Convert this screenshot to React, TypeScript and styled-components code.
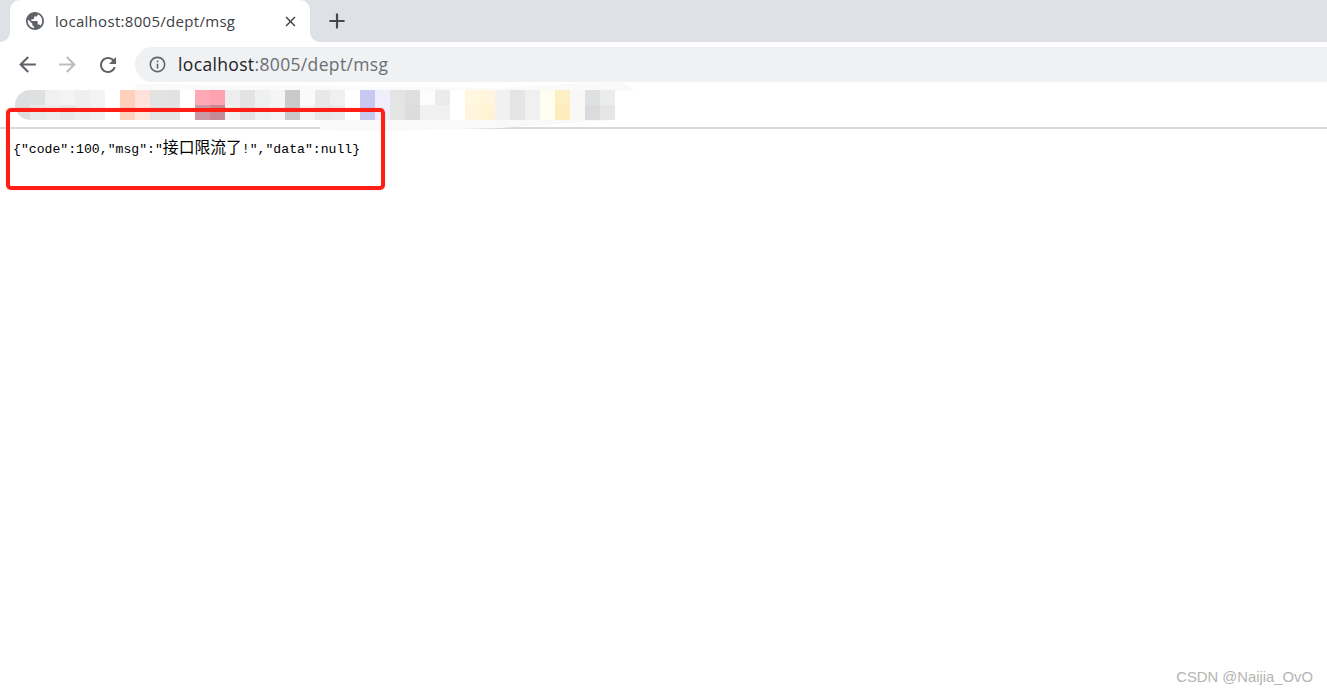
import React from "react";
import styled, { createGlobalStyle } from "styled-components";

const Global = createGlobalStyle`
  html, body { margin: 0; padding: 0; background: #fff; }
  body { font-family: "Open Sans", "Liberation Sans", sans-serif; overflow: hidden; }
`;

const Page = styled.div`
  position: relative;
  display: flex;
  flex-direction: column;
  width: 1327px;
  height: 695px;
  overflow: hidden;
  background: #fff;
`;

const TabStrip = styled.div`
  display: flex;
  align-items: stretch;
  height: 42px;
  background: #dee1e6;
  padding-left: 10px;
`;

const Tab = styled.div`
  position: relative;
  display: flex;
  align-items: center;
  width: 300px;
  box-sizing: border-box;
  padding: 0 11px 0 16px;
  background: #fff;
  border-radius: 10px 10px 0 0;
  color: #5f6368;
  &::before, &::after {
    content: "";
    position: absolute;
    bottom: 0;
    width: 10px;
    height: 10px;
    background: radial-gradient(circle at var(--cx) 0, #dee1e6 9.5px, #fff 10.5px);
  }
  &::before { left: -10px; --cx: 0; }
  &::after { right: -10px; --cx: 100%; }
`;

const TabTitle = styled.span`
  flex: 1;
  margin-left: 11px;
  font-size: 15px;
  letter-spacing: 0.3px;
  color: #3c4043;
  white-space: nowrap;
`;

const CloseGlyph = styled.span`
  display: flex;
  color: #3c4043;
`;

const NewTab = styled.div`
  display: flex;
  align-items: center;
  justify-content: center;
  width: 26px;
  margin-left: 14px;
  color: #44484c;
`;

const Toolbar = styled.div`
  display: flex;
  align-items: center;
  height: 40px;
  box-sizing: border-box;
  padding: 5px 0 0 7.5px;
  background: #fff;
`;

const NavButton = styled.div<{ $dim?: boolean }>`
  display: flex;
  align-items: center;
  justify-content: center;
  width: 40px;
  color: ${(p) => (p.$dim ? "#babcbe" : "#5f6368")};
`;

const Omnibox = styled.div`
  flex: 1;
  display: flex;
  align-items: center;
  height: 35px;
  margin-left: 7.5px;
  padding-left: 12.5px;
  background: #eff1f3;
  border-radius: 17.5px 0 0 17.5px;
  color: #5f6368;
`;

const Url = styled.div`
  margin-left: 11.5px;
  padding-bottom: 2px;
  font-size: 17.5px;
  letter-spacing: 0.35px;
  color: #6b6f74;
  white-space: nowrap;
`;

const Host = styled.span`
  color: #202124;
`;

const BookmarkBar = styled.div`
  height: 47px;
  box-sizing: border-box;
  display: flex;
  padding: 8px 0 0 15px;
  background: #fff;
  border-bottom: 2px solid #d9d9de;
`;

const MosaicColumn = styled.div`
  position: relative;
  z-index: 1;
  display: flex;
  flex-direction: column;
  width: 15px;
  height: 30px;
  &:first-child { border-radius: 15px 0 0 15px; overflow: hidden; }
`;

const MosaicCell = styled.div<{ $c: string }>`
  height: 15px;
  background: ${(p) => p.$c};
`;

const Smear = styled.svg`
  position: absolute;
  left: 0;
  top: 78px;
  pointer-events: none;
`;

const Body = styled.pre`
  margin: 0;
  padding: 8px 0 0 13px;
  height: 20px;
  line-height: 20px;
  font-family: "Liberation Mono", monospace;
  font-size: 13.15px;
  color: #000;
  white-space: pre;
`;

const Cjk = styled.span`
  font-family: "Noto Sans CJK SC", sans-serif;
  font-size: 15.8px;
  font-weight: 400;
`;

const Highlight = styled.div`
  position: absolute;
  z-index: 2;
  left: 6px;
  top: 107.5px;
  width: 379px;
  height: 82.5px;
  box-sizing: border-box;
  border: 4px solid #ff1f14;
  border-radius: 5px;
  box-shadow: 0 0 1px rgba(255, 60, 50, 0.7);
`;

const Watermark = styled.div`
  position: absolute;
  right: 14px;
  top: 669px;
  font-family: "Liberation Sans", Arial, sans-serif;
  font-size: 14.8px;
  line-height: 17px;
  color: #b4b4b4;
  white-space: nowrap;
`;

const W = "#ffffff";
const mosaic: [string, string][] = [
  ["#dcdee0", "#dcdee0"], ["#dfe0e2", "#e9eaea"], ["#f0f0f0", "#ededed"], ["#f3f3f3", "#e8e8e8"],
  ["#f0efed", "#eeeeee"], ["#f3f4f6", "#f1f2f2"], [W, W], ["#ffd0bb", "#ffd0bb"],
  ["#ffe2da", "#ffe6de"], ["#e3e3e1", "#e4e4e4"], ["#e0e2e4", "#e4e5e6"], [W, W],
  ["#ffa8b6", "#cc9aa6"], ["#ffa2b0", "#c48a96"], ["#eeeeee", "#f2f2f2"], ["#e3e3e3", "#e3e3e3"],
  ["#eff1f1", "#eff0f0"], ["#f5f5f5", "#f5f5f5"], ["#c8c9ca", "#cacaca"], ["#fafafa", "#f4f4f4"],
  ["#e8e8e8", "#e8e8e8"], ["#eff0f1", "#eaeaea"], [W, W], ["#c8c8f2", "#c8c8f2"],
  ["#eeeefc", "#eeeefc"], ["#e4e4e4", "#e4e5e3"], ["#dfdfdf", "#dcdcdc"], ["#fcfcfc", "#f0f0f0"],
  ["#ebebeb", "#f0f0f0"], [W, W], ["#fff7e0", "#fff5dc"], ["#fff5dc", "#fff3d4"],
  ["#f1f1f1", "#f1f1f1"], ["#e4e4e4", "#e4e4e4"], ["#f0f0f0", "#f0f0f0"], ["#fffcf0", "#fffcf0"],
  ["#fdf0c4", "#fdecbc"], ["#f9f8f6", "#f9f8f6"], ["#dfe0e2", "#dbdbdd"], ["#ebeded", "#e6e6e6"],
];

const Icon = ({ d, size, box = "0 0 24 24" }: { d: string; size: number; box?: string }) => (
  <svg width={size} height={size} viewBox={box} fill="currentColor" aria-hidden="true">
    <path d={d} />
  </svg>
);

const GLOBE = "M12 2C6.48 2 2 6.48 2 12s4.48 10 10 10 10-4.48 10-10S17.52 2 12 2zm-1 17.93c-3.95-.49-7-3.85-7-7.93 0-.62.08-1.21.21-1.79L9 15v1c0 1.1.9 2 2 2v1.93zm6.9-2.54c-.26-.81-1-1.39-1.9-1.39h-1v-3c0-.55-.45-1-1-1H8v-2h2c.55 0 1-.45 1-1V7h2c1.1 0 2-.9 2-2v-.41c2.93 1.19 5 4.06 5 7.41 0 2.08-.8 3.97-2.1 5.39z";
const CLOSE = "M19 6.41L17.59 5 12 10.59 6.41 5 5 6.41 10.59 12 5 17.59 6.41 19 12 13.41 17.59 19 19 17.59 13.41 12z";
const ADD = "M19 13h-6v6h-2v-6H5v-2h6V5h2v6h6v2z";
const BACK = "M20 11H7.83l5.59-5.59L12 4l-8 8 8 8 1.41-1.41L7.83 13H20v-2z";
const FORWARD = "M4 11h12.17l-5.59-5.59L12 4l8 8-8 8-1.41-1.41L16.17 13H4v-2z";
const RELOAD = "M17.65 6.35C16.2 4.9 14.21 4 12 4c-4.42 0-7.99 3.58-7.99 8s3.57 8 7.99 8c3.73 0 6.84-2.55 7.73-6h-2.08c-.82 2.33-3.04 4-5.65 4-3.31 0-6-2.69-6-6s2.69-6 6-6c1.66 0 3.14.69 4.22 1.78L13 11h7V4l-2.35 2.35z";
const INFO = "M11 7h2v2h-2zm0 4h2v6h-2zm1-9C6.48 2 2 6.48 2 12s4.48 10 10 10 10-4.48 10-10S17.52 2 12 2zm0 18c-4.41 0-8-3.59-8-8s3.59-8 8-8 8 3.59 8 8-3.59 8-8 8z";

export default function App() {
  return (
    <Page>
      <Global />
      <TabStrip>
        <Tab>
          <Icon d={GLOBE} size={18} box="2 2 20 20" />
          <TabTitle>localhost:8005/dept/msg</TabTitle>
          <CloseGlyph><Icon d={CLOSE} size={17} /></CloseGlyph>
        </Tab>
        <NewTab>
          <Icon d={ADD} size={26} />
        </NewTab>
      </TabStrip>
      <Toolbar>
        <NavButton><Icon d={BACK} size={25} /></NavButton>
        <NavButton $dim><Icon d={FORWARD} size={25} /></NavButton>
        <NavButton><Icon d={RELOAD} size={24} /></NavButton>
        <Omnibox>
          <Icon d={INFO} size={19} />
          <Url><Host>localhost</Host>:8005/dept/msg</Url>
        </Omnibox>
      </Toolbar>
      <BookmarkBar>
        {mosaic.map(([a, b], i) => (
          <MosaicColumn key={i}>
            <MosaicCell $c={a} />
            <MosaicCell $c={b} />
          </MosaicColumn>
        ))}
      </BookmarkBar>
      <Smear width="660" height="60" viewBox="0 0 660 60" aria-hidden="true">
        <path d="M135 6 L500 10 L600 4 L618 3 L630 8 L634 13 L135 13 Z" fill="#fafafa" />
        <path d="M320 41 L622 41 L500 50 L380 53 L320 52 Z" fill="#f9f9f9" />
      </Smear>
      <Body>
        {'{"code":100,"msg":"'}<Cjk>接口限流了</Cjk>{'!","data":null}'}
      </Body>
      <Highlight />
      <Watermark>CSDN @Naijia_OvO</Watermark>
    </Page>
  );
}
